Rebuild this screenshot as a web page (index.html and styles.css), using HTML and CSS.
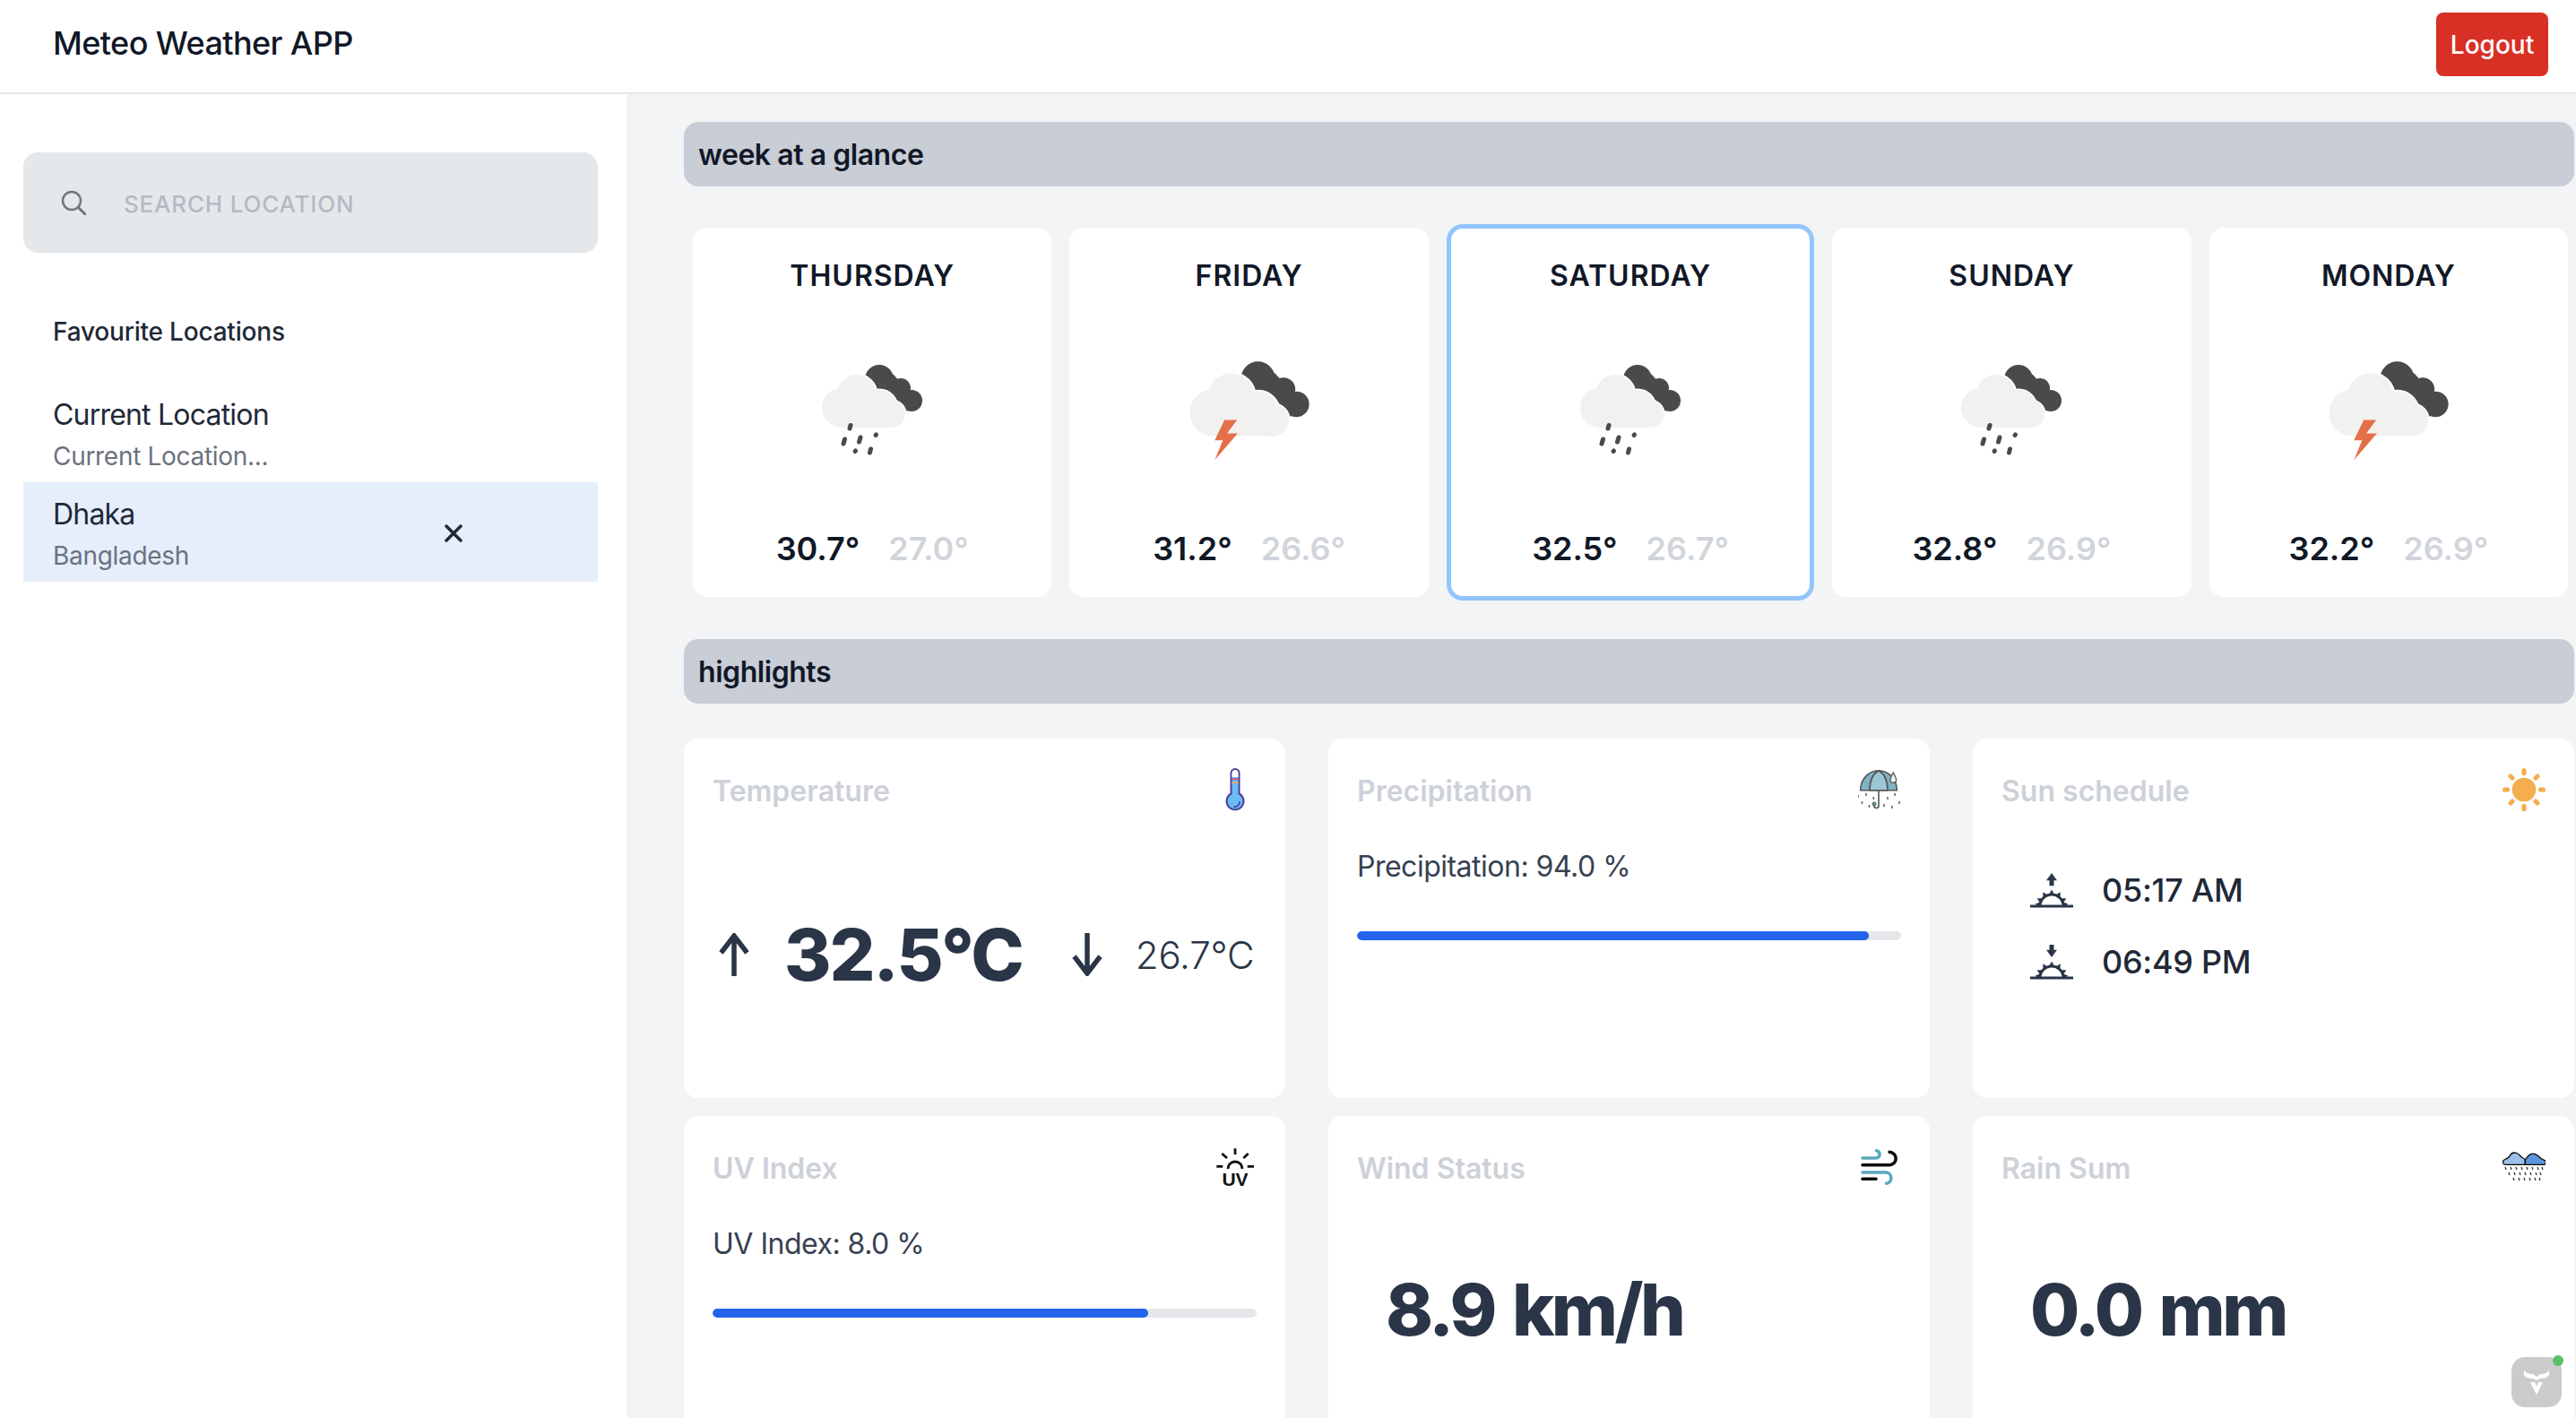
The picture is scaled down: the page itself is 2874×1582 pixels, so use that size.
FILE: index.html
```html
<!DOCTYPE html>
<html lang="en">
<head>
<meta charset="utf-8">
<title>Meteo Weather APP</title>
<link rel="stylesheet" href="styles.css">
</head>
<body>
<svg class="defs" width="0" height="0" aria-hidden="true">
  <defs>
    <g id="clouds">
      <g fill="#4a4a4c">
        <circle cx="222" cy="183" r="16"/><circle cx="246" cy="193" r="11"/><circle cx="258" cy="207" r="12"/>
        <path d="M208 175 L238 178 L262 205 L252 219 L225 205Z"/>
      </g>
      <g fill="#fff" stroke="#fff" stroke-width="3">
        <circle cx="180" cy="215" r="22"/><circle cx="197" cy="200" r="22"/><circle cx="222" cy="215" r="20"/><circle cx="236" cy="222" r="15"/>
      </g>
      <g fill="#f1f1f0">
        <circle cx="180" cy="215" r="22"/><circle cx="197" cy="200" r="22"/><circle cx="222" cy="215" r="20"/><circle cx="236" cy="222" r="15"/>
        <rect x="180" y="205" width="56" height="32"/>
      </g>
    </g>
    <symbol id="rainy" viewBox="140 150 148 148">
      <use href="#clouds"/>
      <g stroke="#4a4a4c" stroke-width="5" stroke-linecap="round">
        <path d="M190 234.500l-1 3.500M183.500 250l-1.500 5M201 248l-1.500 5M218.500 245l-.5 .5M195.500 263l-.5 .5M212.500 261l-1 4"/>
      </g>
    </symbol>
    <symbol id="stormy" viewBox="140 144 148 148">
      <use href="#clouds"/>
      <path fill="#e4704a" d="M190.600 221.700H202.400L193 234.300H203L181.400 259.500L189 241H181.400Z"/>
    </symbol>
    <symbol id="sunrise" viewBox="0 0 48 48">
      <g fill="#2b3548">
        <path d="M24 5L30 13.300H26.500V19.300H21.500V13.300H18Z"/>
        <rect x="0" y="40.500" width="48" height="3"/>
        <path d="M9.500 42a14.500 14.500 0 0 1 29 0h-3a11.500 11.500 0 0 0-23 0Z"/>
        <path d="M21 29L27 29L24 23.500Z"/>
        <path d="M21 29L27 29L24 23.500Z" transform="rotate(-32 24 42)"/>
        <path d="M21 29L27 29L24 23.500Z" transform="rotate(32 24 42)"/>
        <path d="M21 29L27 29L24 23.500Z" transform="rotate(-62 24 42)"/>
        <path d="M21 29L27 29L24 23.500Z" transform="rotate(62 24 42)"/>
        <path d="M21 29L27 29L24 23.500Z" transform="rotate(-82 24 42)"/>
        <path d="M21 29L27 29L24 23.500Z" transform="rotate(82 24 42)"/>
      </g>
    </symbol>
    <symbol id="sunset" viewBox="0 0 48 48">
      <g fill="#2b3548">
        <path d="M24 19L30 10.700H26.500V5H21.500V10.700H18Z"/>
        <rect x="0" y="40.500" width="48" height="3"/>
        <path d="M9.500 42a14.500 14.500 0 0 1 29 0h-3a11.500 11.500 0 0 0-23 0Z"/>
        <path d="M21 29L27 29L24 23.500Z"/>
        <path d="M21 29L27 29L24 23.500Z" transform="rotate(-32 24 42)"/>
        <path d="M21 29L27 29L24 23.500Z" transform="rotate(32 24 42)"/>
        <path d="M21 29L27 29L24 23.500Z" transform="rotate(-62 24 42)"/>
        <path d="M21 29L27 29L24 23.500Z" transform="rotate(62 24 42)"/>
        <path d="M21 29L27 29L24 23.500Z" transform="rotate(-82 24 42)"/>
        <path d="M21 29L27 29L24 23.500Z" transform="rotate(82 24 42)"/>
      </g>
    </symbol>
  </defs>
</svg>

<header class="topbar">
  <h1 class="brand">Meteo Weather APP</h1>
  <button class="logout">Logout</button>
</header>

<div class="layout">
  <aside class="sidebar">
    <div class="search">
      <svg class="search-icon" viewBox="0 0 28 28"><circle cx="12" cy="12" r="10" fill="none" stroke="#757575" stroke-width="2.500"/><path d="M19.500 19.500L27 27" stroke="#757575" stroke-width="3" stroke-linecap="round"/></svg>
      <span class="search-text">SEARCH LOCATION</span>
    </div>
    <h2 class="fav-title">Favourite Locations</h2>
    <div class="loc">
      <div class="loc-text"><div class="loc-name">Current Location</div><div class="loc-sub">Current Location...</div></div>
    </div>
    <div class="loc loc-active">
      <div class="loc-text"><div class="loc-name">Dhaka</div><div class="loc-sub">Bangladesh</div></div>
      <svg class="loc-x" viewBox="0 0 20 20"><path d="M2 2L18 18M18 2L2 18" stroke="#1f2937" stroke-width="3.500" stroke-linecap="round"/></svg>
    </div>
  </aside>

  <main class="main">
    <div class="section-bar">week at a glance</div>
    <div class="days">
      <div class="day">
        <div class="day-name">THURSDAY</div>
        <div class="day-icon"><svg class="ico-rain"><use href="#rainy"/></svg></div>
        <div class="day-temps"><span class="hi">30.7°</span><span class="lo">27.0°</span></div>
      </div>
      <div class="day">
        <div class="day-name">FRIDAY</div>
        <div class="day-icon"><svg class="ico-storm"><use href="#stormy"/></svg></div>
        <div class="day-temps"><span class="hi">31.2°</span><span class="lo">26.6°</span></div>
      </div>
      <div class="day day-active">
        <div class="day-name">SATURDAY</div>
        <div class="day-icon"><svg class="ico-rain"><use href="#rainy"/></svg></div>
        <div class="day-temps"><span class="hi">32.5°</span><span class="lo">26.7°</span></div>
      </div>
      <div class="day">
        <div class="day-name">SUNDAY</div>
        <div class="day-icon"><svg class="ico-rain"><use href="#rainy"/></svg></div>
        <div class="day-temps"><span class="hi">32.8°</span><span class="lo">26.9°</span></div>
      </div>
      <div class="day">
        <div class="day-name">MONDAY</div>
        <div class="day-icon"><svg class="ico-storm"><use href="#stormy"/></svg></div>
        <div class="day-temps"><span class="hi">32.2°</span><span class="lo">26.9°</span></div>
      </div>
    </div>

    <div class="section-bar">highlights</div>
    <div class="grid">
      <section class="card">
        <div class="card-head"><span class="card-title">Temperature</span>
          <svg class="card-icon" viewBox="0 0 48 48">
            <path d="M19.500 28.500V5.500a4.500 4.500 0 0 1 9 0v23a9.500 9.500 0 1 1-9 0Z" fill="#6bbcf5" stroke="#4a3f9b" stroke-width="2"/>
            <path d="M20.500 5.500a3.500 3.500 0 0 1 7 0V10h-7Z" fill="#fff"/>
            <path d="M20 12.300h8" stroke="#e8417f" stroke-width="1.600"/>
            <path d="M20 16.300h8" stroke="#f2a65a" stroke-width="1.600"/>
            <path d="M22 43a5.500 5.500 0 0 0 7-6" fill="none" stroke="#4a3f9b" stroke-width="1.600"/>
          </svg>
        </div>
        <div class="temp-row">
          <svg class="arrow" viewBox="0 0 48 48"><path d="M24 48V3M9.500 22L24 3L38.500 22" fill="none" stroke="#2b3548" stroke-width="5.500"/></svg>
          <span class="big">32.5°C</span>
          <svg class="arrow" viewBox="0 0 48 48"><path d="M24 0V45M9.500 26L24 45L38.500 26" fill="none" stroke="#2b3548" stroke-width="5.500"/></svg>
          <span class="small-temp">26.7°C</span>
        </div>
      </section>

      <section class="card">
        <div class="card-head"><span class="card-title">Precipitation</span>
          <svg class="card-icon" viewBox="0 0 48 48">
            <path d="M2.700 24.700A20.300 22 0 0 1 43.300 24.700Z" fill="#7fb2c4" stroke="#555" stroke-width="1.600"/>
            <path d="M13 24.700C13 14 17 6 23 2.700C29 6 33 14 33 24.700Z" fill="#9cc6d6" stroke="#555" stroke-width="1.600"/>
            <path d="M23 24.700V42a2.500 2.500 0 0 1-5 0" fill="none" stroke="#555" stroke-width="1.600"/>
            <path d="M39.300 5C37 9 36 11 36 13a3.300 3.300 0 0 0 6.600 0C42.600 11 41.500 9 39.300 5Z" fill="#eee" stroke="#555" stroke-width="1.300"/>
            <circle cx="18" cy="40" r="2" fill="#5d97ad" stroke="#555"/>
            <path d="M0 30v3M9 28v3M17.300 32v3M33 32v3M41 28v3M4.500 37v3M12.500 41v3M29 40v3M38 42v3M46 37v3" stroke="#666" stroke-width="1.600"/>
          </svg>
        </div>
        <div class="metric">Precipitation: 94.0 %</div>
        <div class="track"><div class="fill" style="width:94%"></div></div>
      </section>

      <section class="card">
        <div class="card-head"><span class="card-title">Sun schedule</span>
          <svg class="card-icon" viewBox="0 0 48 48">
            <circle cx="24" cy="24" r="13.300" fill="#f4ae4f"/>
            <g stroke="#f4ae4f" stroke-width="5.200" stroke-linecap="round">
              <path d="M24 2.600v3M24 42.400v3M2.600 24h3M42.400 24h3M9 9l2 2M37 37l2 2M39 9l-2 2M11 37l-2 2"/>
            </g>
          </svg>
        </div>
        <div class="sun-list">
          <div class="sun-row"><svg class="sun-icon"><use href="#sunrise"/></svg><span class="sun-time">05:17 AM</span></div>
          <div class="sun-row"><svg class="sun-icon"><use href="#sunset"/></svg><span class="sun-time">06:49 PM</span></div>
        </div>
      </section>

      <section class="card">
        <div class="card-head"><span class="card-title">UV Index</span>
          <svg class="card-icon" viewBox="0 0 48 48">
            <g stroke="#111" stroke-width="2.800" fill="none">
              <path d="M24 3.300V10M9.300 9L15 14M38.700 9L33.300 14M3.300 23.300h7M37.700 23.300H45"/>
              <path d="M16 26a8 8 0 0 1 16 0"/>
            </g>
            <text class="uv-glyph" x="24" y="45" text-anchor="middle">UV</text>
          </svg>
        </div>
        <div class="metric">UV Index: 8.0 %</div>
        <div class="track"><div class="fill" style="width:80%"></div></div>
      </section>

      <section class="card">
        <div class="card-head"><span class="card-title">Wind Status</span>
          <svg class="card-icon" viewBox="-3 0 48 48" fill="none" stroke-width="3.500" stroke-linecap="round">
            <path d="M2 14H17.500a4.200 4.200 0 0 0 0-8.300" stroke="#5aa9bd"/>
            <path d="M2 21.700H32a7.200 7.200 0 0 0 0-14.400" stroke="#0a0a0a"/>
            <path d="M2 30H28.500a6.200 6.200 0 0 1 0 12.300" stroke="#5aa9bd"/>
            <path d="M2 37.300H17" stroke="#0a0a0a"/>
          </svg>
        </div>
        <div class="stat">8.9 km/h</div>
      </section>

      <section class="card">
        <div class="card-head"><span class="card-title">Rain Sum</span>
          <svg class="card-icon" viewBox="0 0 48 48">
            <path d="M25.300 21.300H3a2.800 2.800 0 0 1-1-5.300C5 15 7 14 8.500 11C10 8.500 13 7.500 16 8.500C19 9.500 20 13 23 14C24.500 14.500 25.300 15.500 25.300 17Z" fill="#9cc1e9" stroke="#0a0a0a" stroke-width="1.300"/>
            <path d="M25.300 21.300H45a2.500 2.500 0 0 0 1.500-5C43 15.500 41 13 39 11C36 8.500 32 8.500 29.500 11C27.500 13 25.300 15 25.300 17Z" fill="#5c95dc" stroke="#0a0a0a" stroke-width="1.300"/>
            <g stroke="#222" stroke-width="1.200" stroke-dasharray="3.500 2.500" fill="none">
              <path d="M3 24l1 3M9 24l1 3M15 24l1 3M21 24l1 3M27 24l1 3M33 24l1 3M39 24l1 3M44 24l1 3"/>
              <path d="M7 30l1 3M13 30l1 3M19 30l1 3M25 30l1 3M31 30l1 3M37 30l1 3M42 30l1 3"/>
              <path d="M12 36l1 3M18 36l1 3M24 36l1 3M30 36l1 3M36 36l1 3M41 36l1 3"/>
            </g>
          </svg>
        </div>
        <div class="stat">0.0 mm</div>
      </section>
    </div>
  </main>
</div>

<div class="devbadge">
  <svg class="devlogo" viewBox="0 0 56 56">
    <path d="M14 14C15 18 19 19 24 19L28 22L32 19C37 19 41 18 42 14V20C40 23 36 24 32 24L28 26L24 24C20 24 16 23 14 20Z" fill="#fff"/>
    <path d="M21 28H26L28 33L30 28H35L28 42Z" fill="#fff"/>
  </svg>
  <span class="devdot"></span>
</div>
</body>
</html>
```
FILE: styles.css
```css
* { box-sizing: border-box; }
html, body { margin: 0; height: 100%; }
body {
  width: 2874px;
  height: 1582px;
  overflow: hidden;
  font-family: Inter, "Liberation Sans", sans-serif;
  color: #1f2937;
  background: #fff;
  display: flex;
  flex-direction: column;
}
.defs { position: absolute; }

.topbar {
  flex: none;
  height: 105px;
  border-bottom: 2px solid #e5e7eb;
  background: #fff;
  display: flex;
  align-items: center;
  justify-content: space-between;
  padding: 0 31px 8px 59px;
}
.brand { margin: 0; font-size: 36px; font-weight: 500; letter-spacing: -.6px; color: #111827; }
.logout {
  width: 125px;
  height: 71px;
  margin-top: 4px;
  border: 0;
  border-radius: 8px;
  background: #d93025;
  color: #fff;
  font: 500 28px Inter, sans-serif;
}

.layout { flex: 1; min-height: 0; display: flex; }

.sidebar {
  flex: none;
  width: 699px;
  background: #fff;
  padding: 65px 32px 0 26px;
}
.search {
  height: 112px;
  background: #e5e8eb;
  border-radius: 16px;
  display: flex;
  align-items: center;
  padding-left: 42px;
  gap: 42px;
}
.search-icon { width: 28px; height: 28px; flex: none; }
.search-text { margin-top: 2px; font-size: 26px; font-weight: 500; color: #b4bac4; letter-spacing: .8px; }
.fav-title { margin: 67px 0 36px 33px; font-size: 28px; line-height: 42px; font-weight: 500; letter-spacing: -.2px; color: #1f2937; }
.loc { height: 111px; padding: 3px 33px 0; display: flex; justify-content: space-between; align-items: center; }
.loc-active { background: #e6eefb; }
.loc-text { flex: 1; }
.loc-name { font-size: 32px; line-height: 48px; letter-spacing: -.8px; color: #1f2937; }
.loc-sub { font-size: 28px; line-height: 42px; margin-top: 1px; letter-spacing: -.3px; color: #6b7280; }
.loc-x { width: 20px; height: 20px; margin: 0 118px 0 0; flex: none; }

.main { flex: 1; min-width: 0; background: #f3f4f6; padding: 31px 2px 0 64px; overflow: hidden; }
.section-bar {
  height: 72px;
  background: #c9cdd6;
  border-radius: 16px;
  display: flex;
  align-items: center;
  padding-left: 16px;
  font-size: 32px;
  font-weight: 600;
  letter-spacing: -.45px;
  color: #111827;
}
.days { display: flex; align-items: center; gap: 20px; padding: 42px 7px 43px 10px; }
.day {
  box-sizing: content-box;
  flex: 1 1 0;
  width: 0;
  height: 412px;
  background: #fff;
  border-radius: 16px;
  display: flex;
  flex-direction: column;
  align-items: center;
}
.day-active { height: 410px; border: 5px solid #93c5fd; border-radius: 18px; }
.day-name { margin-top: 30px; font-size: 32px; line-height: 48px; font-weight: 600; letter-spacing: 1px; color: #111827; }
.day-active .day-name { margin-top: 29px; }
.day-icon { height: 176px; margin-top: 44px; display: flex; align-items: center; justify-content: center; }
.ico-rain { width: 148px; height: 148px; }
.ico-storm { width: 176px; height: 176px; }
.day-temps { margin-top: 33px; display: flex; gap: 32px; font-size: 36px; line-height: 54px; font-weight: 600; }
.hi { color: #111827; }
.lo { color: #d1d5db; }

.grid {
  margin-top: 39px;
  display: grid;
  grid-template-columns: repeat(3, 1fr);
  column-gap: 48px;
  row-gap: 20px;
}
.card { height: 401px; background: #fff; border-radius: 16px; padding: 33px 32px 0; }
.card-head { height: 48px; display: flex; justify-content: space-between; align-items: center; }
.card-title { margin-top: 3px; font-size: 32px; font-weight: 600; color: #cdd1d8; }
.card-icon { width: 48px; height: 48px; flex: none; }
.uv-glyph { font: 700 21px "Liberation Sans", sans-serif; fill: #111; }
.temp-row { margin-top: 112px; display: flex; align-items: center; color: #2b3548; }
.arrow { width: 48px; height: 48px; flex: none; }
.big { margin: 0 48px 0 32px; font-size: 80px; line-height: 96px; font-weight: 800; letter-spacing: -2px; color: #2b3548; }
.small-temp { margin-left: 30px; font-size: 42px; font-weight: 300; color: #2b3548; letter-spacing: -.2px; }
.metric { margin-top: 38px; font-size: 32px; line-height: 48px; letter-spacing: -.5px; color: #374151; }
.track { margin-top: 48px; height: 10px; border-radius: 5px; background: #e5e7eb; overflow: hidden; }
.fill { height: 100%; border-radius: 5px; background: #2563eb; }
.sun-list { margin-top: 64px; padding-left: 32px; display: flex; flex-direction: column; gap: 32px; }
.sun-row { display: flex; align-items: center; gap: 32px; }
.sun-icon { width: 48px; height: 48px; flex: none; }
.sun-time { font-size: 36px; font-weight: 500; letter-spacing: -.3px; color: #1f2937; }
.stat { margin-top: 87px; padding-left: 32px; font-size: 80px; line-height: 96px; font-weight: 800; letter-spacing: -3.5px; word-spacing: 6px; color: #2b3548; }

.devbadge {
  position: fixed;
  left: 2802px;
  top: 1514px;
  width: 56px;
  height: 56px;
  border-radius: 15px;
  background: #cbcbcb;
}
.devlogo { width: 56px; height: 56px; display: block; }
.devdot {
  position: absolute;
  left: 46px;
  top: -2px;
  width: 12px;
  height: 12px;
  border-radius: 50%;
  background: #5bbf6b;
}
```
